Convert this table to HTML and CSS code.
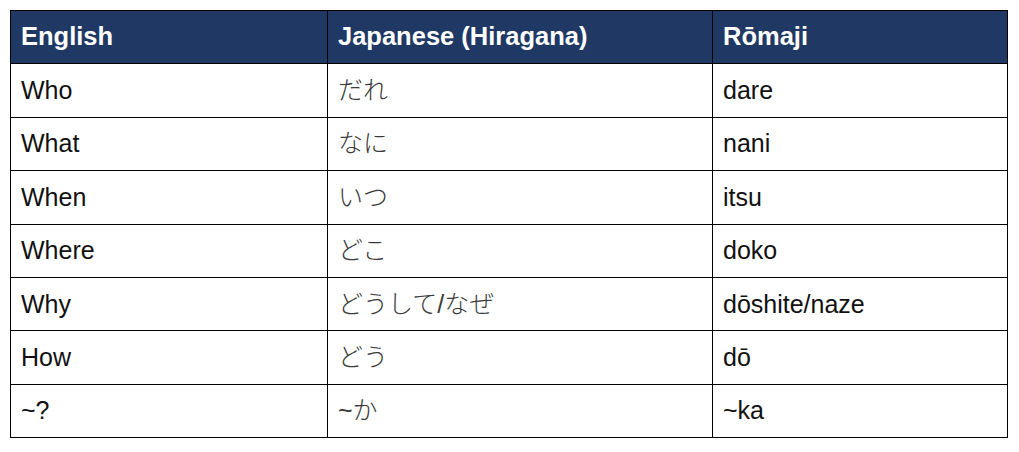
FILE: index.html
```html
<!DOCTYPE html>
<html lang="en">
<head>
<meta charset="utf-8">
<title>Question words</title>
<link rel="stylesheet" href="styles.css">
</head>
<body>
<table class="vocab">
  <colgroup>
    <col class="c-en">
    <col class="c-jp">
    <col class="c-ro">
  </colgroup>
  <thead>
    <tr><th>English</th><th>Japanese (Hiragana)</th><th>Rōmaji</th></tr>
  </thead>
  <tbody>
    <tr><td>Who</td><td class="jp" lang="ja">だれ</td><td>dare</td></tr>
    <tr><td>What</td><td class="jp" lang="ja">なに</td><td>nani</td></tr>
    <tr><td>When</td><td class="jp" lang="ja">いつ</td><td>itsu</td></tr>
    <tr><td>Where</td><td class="jp" lang="ja">どこ</td><td>doko</td></tr>
    <tr><td>Why</td><td class="jp" lang="ja">どうして/なぜ</td><td>dōshite/naze</td></tr>
    <tr><td>How</td><td class="jp" lang="ja">どう</td><td>dō</td></tr>
    <tr><td>~?</td><td class="jp" lang="ja">~か</td><td>~ka</td></tr>
  </tbody>
</table>
</body>
</html>
```

FILE: styles.css
```css
html, body {
  margin: 0;
  padding: 0;
  background: #ffffff;
}
body {
  padding: 10px;
  font-family: "Liberation Sans", Arial, sans-serif;
}
.vocab {
  border-collapse: collapse;
  width: 997px;
  table-layout: fixed;
  font-size: 25px;
  color: #111111;
}
.c-en { width: 317px; }
.c-jp { width: 385px; }
.c-ro { width: 295px; }
.vocab tr {
  height: 53.4px;
}
.vocab th,
.vocab td {
  border: 1px solid #000000;
  padding: 0 10px;
  text-align: left;
  vertical-align: middle;
  line-height: 1;
}
.vocab th {
  background: #203864;
  color: #ffffff;
  font-weight: bold;
  font-size: 25.5px;
}
.vocab td.jp {
  font-family: "Liberation Sans", "Noto Sans CJK JP", sans-serif;
  font-weight: 300;
  color: #3a3a3a;
}
```
